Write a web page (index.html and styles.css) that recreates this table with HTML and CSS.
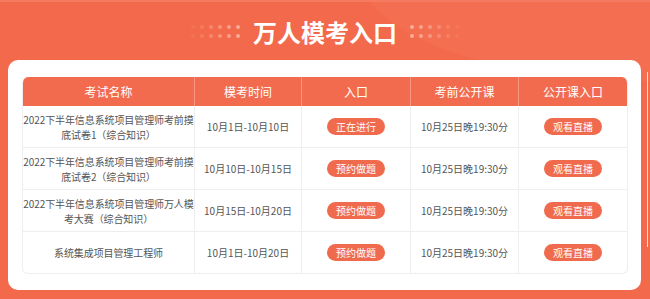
FILE: index.html
```html
<!DOCTYPE html>
<html lang="zh">
<head>
<meta charset="utf-8">
<link rel="stylesheet" href="styles.css">
</head>
<body>
<div class="page">
  <div class="banner">
    <div class="dots dots-left">
      <span></span><span></span><span></span><span></span><span></span><span></span>
      <span></span><span></span><span></span><span></span><span></span><span></span>
    </div>
    <h1 class="title">万人模考入口</h1>
    <div class="dots dots-right">
      <span></span><span></span><span></span><span></span><span></span><span></span>
      <span></span><span></span><span></span><span></span><span></span><span></span>
    </div>
  </div>
  <div class="card">
    <div class="grid">
      <div class="cell head">考试名称</div>
      <div class="cell head">模考时间</div>
      <div class="cell head">入口</div>
      <div class="cell head">考前公开课</div>
      <div class="cell head last">公开课入口</div>

      <div class="cell name">2022下半年信息系统项目管理师考前摸<br>底试卷1（综合知识）</div>
      <div class="cell">10月1日-10月10日</div>
      <div class="cell"><span class="btn">正在进行</span></div>
      <div class="cell">10月25日晚19:30分</div>
      <div class="cell last"><span class="btn">观看直播</span></div>

      <div class="cell name">2022下半年信息系统项目管理师考前摸<br>底试卷2（综合知识）</div>
      <div class="cell">10月10日-10月15日</div>
      <div class="cell"><span class="btn">预约做题</span></div>
      <div class="cell">10月25日晚19:30分</div>
      <div class="cell last"><span class="btn">观看直播</span></div>

      <div class="cell name">2022下半年信息系统项目管理师万人模<br>考大赛（综合知识）</div>
      <div class="cell">10月15日-10月20日</div>
      <div class="cell"><span class="btn">预约做题</span></div>
      <div class="cell">10月25日晚19:30分</div>
      <div class="cell last"><span class="btn">观看直播</span></div>

      <div class="cell name bottom">系统集成项目管理工程师</div>
      <div class="cell bottom">10月1日-10月20日</div>
      <div class="cell bottom"><span class="btn">预约做题</span></div>
      <div class="cell bottom">10月25日晚19:30分</div>
      <div class="cell bottom last"><span class="btn">观看直播</span></div>
    </div>
  </div>
</div>
</body>
</html>
```

FILE: styles.css
```css
html, body {
  margin: 0;
  padding: 0;
}
body {
  background: #f3694b;
  font-family: "Noto Sans CJK SC", "Microsoft YaHei", sans-serif;
  width: 650px;
  height: 299px;
  overflow: hidden;
}
.page {
  position: relative;
  height: 299px;
  background: radial-gradient(ellipse 480px 180px at 650px -30px, #f46f52 0%, #f46f52 60%, rgba(243,105,75,0) 61%), #f3694b;
  border-top: 2px solid #f57a60;
  box-sizing: border-box;
}
.page::after {
  content: "";
  position: absolute;
  right: 2px;
  top: 70px;
  width: 1px;
  height: 175px;
  background: #e9e3e0;
}
.banner {
  height: 58px;
  display: flex;
  align-items: center;
  justify-content: center;
  gap: 13px;
}
.title {
  margin: 0;
  color: #fff;
  font-size: 24px;
  font-weight: 700;
  line-height: 1;
  padding-top: 2px;
}
.dots {
  display: grid;
  grid-template-columns: repeat(6, 4px);
  grid-auto-rows: 4px;
  column-gap: 5px;
  row-gap: 5px;
}
.dots span {
  width: 4px;
  height: 4px;
  border-radius: 50%;
  background: #fff;
}
.dots-left span:nth-child(6n+1) { opacity: .06; }
.dots-left span:nth-child(6n+2) { opacity: .12; }
.dots-left span:nth-child(6n+3) { opacity: .2; }
.dots-left span:nth-child(6n+4) { opacity: .28; }
.dots-left span:nth-child(6n+5) { opacity: .36; }
.dots-left span:nth-child(6n+6) { opacity: .44; }
.dots-right span:nth-child(6n+6) { opacity: .06; }
.dots-right span:nth-child(6n+5) { opacity: .12; }
.dots-right span:nth-child(6n+4) { opacity: .2; }
.dots-right span:nth-child(6n+3) { opacity: .28; }
.dots-right span:nth-child(6n+2) { opacity: .36; }
.dots-right span:nth-child(6n+1) { opacity: .44; }

.card {
  margin: 0 9px 0 8px;
  height: 230px;
  background: #fff;
  border-radius: 10px;
  box-sizing: border-box;
  padding: 17px 13px 0 14px;
}
.grid {
  display: grid;
  grid-template-columns: 172px 107px 109px 108px 108px;
  grid-template-rows: 29px 42px 42px 42px 41px;
  border: 1px solid #eeeeee;
  border-top: none;
  border-radius: 6px;
  overflow: hidden;
}
.cell {
  display: flex;
  align-items: center;
  justify-content: center;
  text-align: center;
  box-sizing: border-box;
  border-right: 1px solid #eeeeee;
  border-bottom: 1px solid #eeeeee;
  font-size: 10px;
  color: #555;
  line-height: 15px;
  white-space: nowrap;
}
.cell.last { border-right: none; }
.cell.bottom { border-bottom: none; }
.head {
  background: #f36b4e;
  color: #fff;
  font-size: 12px;
  border-right: 1px solid #f79781;
  border-bottom: none;
}
.head.last { border-right: none; }
.name {
  padding: 0;
  letter-spacing: -0.1px;
}
.btn {
  display: inline-block;
  width: 58px;
  height: 17px;
  line-height: 17px;
  border-radius: 9px;
  background: #f06a4e;
  color: #fff;
  font-size: 10px;
}
```
